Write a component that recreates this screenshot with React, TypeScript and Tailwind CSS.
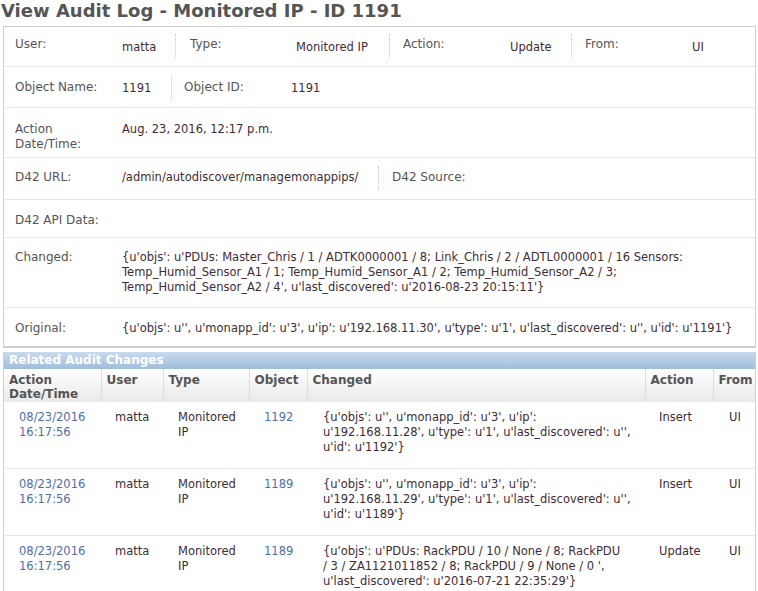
import React from "react";

const label = "text-[12px] leading-[15px] text-[#555] shrink-0";
const value = "text-[11.5px] leading-[15px] text-[#402c36]";
const link = "text-[#4d6ea8]";

const Sep = () => <div className="self-center h-[24px] -my-[6px] border-l border-dotted border-[#c8c8c8]" />;

const rows = [
  {
    date: ["08/23/2016", "16:17:56"],
    obj: "1192",
    changed: [
      "{u'objs': u'', u'monapp_id': u'3', u'ip':",
      "u'192.168.11.28', u'type': u'1', u'last_discovered': u'',",
      "u'id': u'1192'}",
    ],
    action: "Insert",
  },
  {
    date: ["08/23/2016", "16:17:56"],
    obj: "1189",
    changed: [
      "{u'objs': u'', u'monapp_id': u'3', u'ip':",
      "u'192.168.11.29', u'type': u'1', u'last_discovered': u'',",
      "u'id': u'1189'}",
    ],
    action: "Insert",
  },
  {
    date: ["08/23/2016", "16:17:56"],
    obj: "1189",
    changed: [
      "{u'objs': u'PDUs: RackPDU / 10 / None / 8; RackPDU",
      "/ 3 / ZA1121011852 / 8; RackPDU / 9 / None / 0 ',",
      "u'last_discovered': u'2016-07-21 22:35:29'}",
    ],
    action: "Update",
  },
];

const App: React.FC = () => {
  return (
    <div className="font-['DejaVu_Sans',Verdana,sans-serif] bg-white w-[758px] h-[591px] overflow-hidden">
      {/* ======= Title ======= */}
      <h1 className="h-[26px] leading-[22px] text-[18px] font-bold text-[#555] pl-[1px] whitespace-nowrap">
        View Audit Log - Monitored IP - ID 1191
      </h1>

      {/* ======= Detail box ======= */}
      <div className="mx-[3px] w-[753px] border border-[#cfcfcf] border-b-2">
        <div className="flex items-start pt-[10px] pb-[11px] border-b border-[#e6e6e6]">
          <div className="flex w-[171px] pl-[11px]">
            <span className={`${label} w-[107px]`}>User:</span>
            <span className={`${value} pt-[3px]`}>matta</span>
          </div>
          <Sep />
          <div className="flex w-[213px] pl-[14px]">
            <span className={`${label} w-[106px]`}>Type:</span>
            <span className={`${value} pt-[3px]`}>Monitored IP</span>
          </div>
          <Sep />
          <div className="flex w-[181px] pl-[13px]">
            <span className={`${label} w-[107px]`}>Action:</span>
            <span className={`${value} pt-[3px]`}>Update</span>
          </div>
          <Sep />
          <div className="flex pl-[13px]">
            <span className={`${label} w-[107px]`}>From:</span>
            <span className={`${value} pt-[3px]`}>UI</span>
          </div>
        </div>

        <div className="flex items-start pt-[13px] pb-[11px] border-b border-[#e6e6e6]">
          <div className="flex w-[167px] pl-[11px]">
            <span className={`${label} w-[107px]`}>Object Name:</span>
            <span className={`${value} pt-[1px]`}>1191</span>
          </div>
          <Sep />
          <div className="flex pl-[12px]">
            <span className={`${label} w-[107px]`}>Object ID:</span>
            <span className={`${value} pt-[1px]`}>1191</span>
          </div>
        </div>

        <div className="flex items-start pl-[11px] pt-[14px] pb-[5px] border-b border-[#e6e6e6]">
          <span className={`${label} w-[107px]`}>
            Action
            <br />
            Date/Time:
          </span>
          <span className={value}>Aug. 23, 2016, 12:17 p.m.</span>
        </div>

        <div className="flex items-start pt-[12px] pb-[14px] border-b border-[#e6e6e6]">
          <div className="flex w-[374px] pl-[11px]">
            <span className={`${label} w-[107px]`}>D42 URL:</span>
            <span className={value}>/admin/autodiscover/managemonappips/</span>
          </div>
          <Sep />
          <div className="flex pl-[13px]">
            <span className={label}>D42 Source:</span>
          </div>
        </div>

        <div className="flex items-start pl-[11px] pt-[13px] pb-[9px] border-b border-[#e6e6e6]">
          <span className={label}>D42 API Data:</span>
        </div>

        <div className="flex items-start pl-[11px] pt-[12px] pb-[12px] border-b border-[#e6e6e6]">
          <span className={`${label} w-[107px]`}>Changed:</span>
          <span className={`${value} whitespace-nowrap`}>
            {"{u'objs': u'PDUs: Master_Chris / 1 / ADTK0000001 / 8; Link_Chris / 2 / ADTL0000001 / 16 Sensors:"}
            <br />
            Temp_Humid_Sensor_A1 / 1; Temp_Humid_Sensor_A1 / 2; Temp_Humid_Sensor_A2 / 3;
            <br />
            {"Temp_Humid_Sensor_A2 / 4', u'last_discovered': u'2016-08-23 20:15:11'}"}
          </span>
        </div>

        <div className="flex items-start pl-[11px] pt-[13px] pb-[10px]">
          <span className={`${label} w-[107px]`}>Original:</span>
          <span className={`${value} whitespace-nowrap`}>
            {"{u'objs': u'', u'monapp_id': u'3', u'ip': u'192.168.11.30', u'type': u'1', u'last_discovered': u'', u'id': u'1191'}"}
          </span>
        </div>
      </div>

      {/* ======= Related Audit Changes ======= */}
      <div className="mx-[3px] mt-[4px] w-[753px] border-x border-[#cfcfcf]">
        <div className="h-[17px] leading-[17px] pl-[5px] text-[12px] font-bold text-white bg-gradient-to-b from-[#c9dbee] to-[#9fbddb]">
          Related Audit Changes
        </div>
        <table className="w-full table-fixed border-collapse">
          <colgroup>
            <col className="w-[97px]" />
            <col className="w-[62px]" />
            <col className="w-[86px]" />
            <col className="w-[58px]" />
            <col className="w-[338px]" />
            <col className="w-[68px]" />
            <col />
          </colgroup>
          <thead>
            <tr className="bg-gradient-to-b from-white to-[#e9e9e9] h-[33px]">
              {["Action\nDate/Time", "User", "Type", "Object", "Changed", "Action", "From"].map((h, i) => (
                <th
                  key={h}
                  className={`text-left align-top pt-[4px] pl-[5px] text-[12px] leading-[14px] font-bold text-[#555] whitespace-pre-line ${
                    i > 0 ? "border-l border-[#dcdcdc]" : ""
                  }`}
                >
                  {h}
                </th>
              ))}
            </tr>
          </thead>
          <tbody className="text-[11.5px] leading-[15px] text-[#402c36]">
            {rows.map((r, i) => (
              <tr key={i} className="border-b border-[#e6e6e6] align-top">
                <td className={`pl-[15px] pt-[8px] pb-[13px] whitespace-nowrap ${link}`}>
                  {r.date[0]}
                  <br />
                  {r.date[1]}
                </td>
                <td className="pl-[14px] pt-[8px] pb-[13px]">matta</td>
                <td className="pl-[15px] pt-[8px] pb-[13px] whitespace-nowrap">
                  Monitored
                  <br />
                  IP
                </td>
                <td className={`pl-[15px] pt-[8px] pb-[13px] ${link}`}>{r.obj}</td>
                <td className="pl-[16px] pt-[8px] pb-[13px] whitespace-nowrap">
                  {r.changed.map((l, j) => (
                    <div key={j}>{l}</div>
                  ))}
                </td>
                <td className="pl-[14px] pt-[8px] pb-[13px]">{r.action}</td>
                <td className="pl-[16px] pt-[8px] pb-[13px]">UI</td>
              </tr>
            ))}
          </tbody>
        </table>
      </div>
    </div>
  );
};

export default App;
